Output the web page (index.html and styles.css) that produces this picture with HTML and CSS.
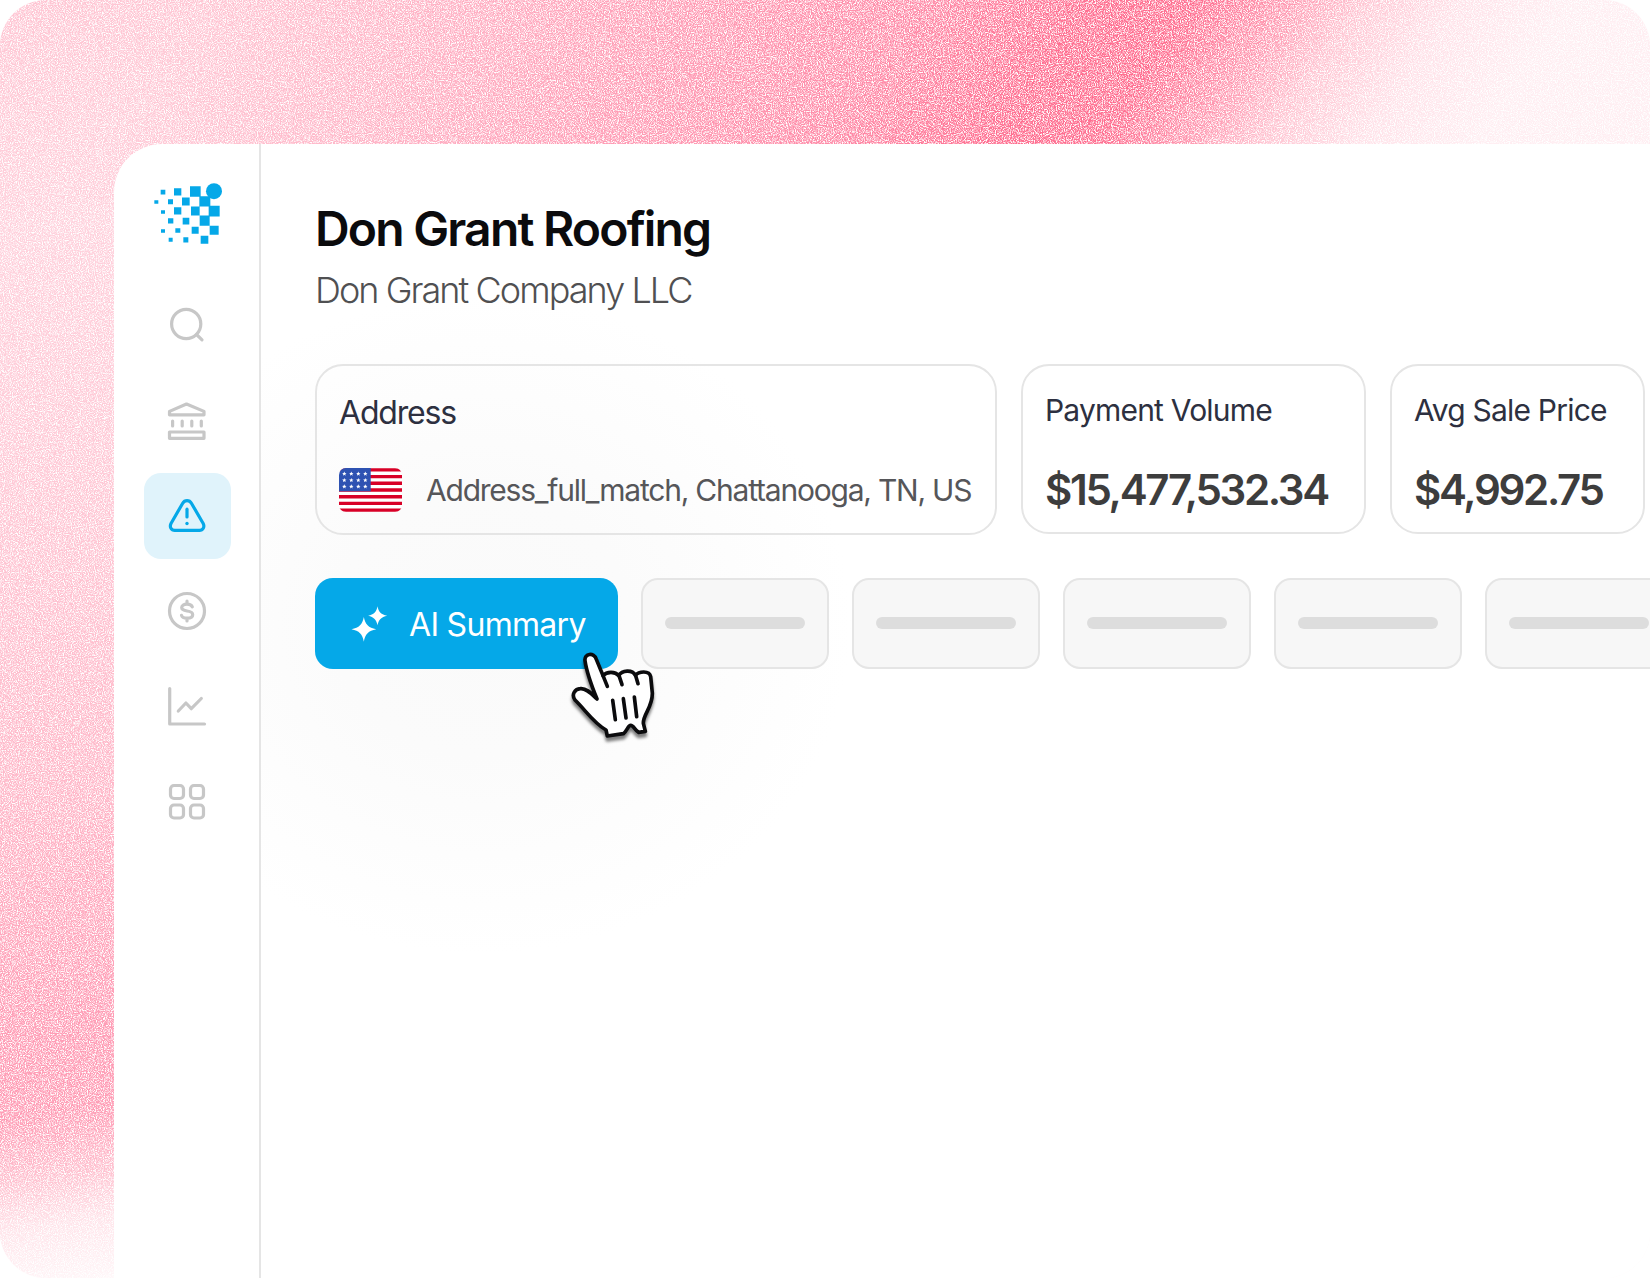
FILE: index.html
```html
<!DOCTYPE html>
<html lang="en">
<head>
  <meta charset="UTF-8" />
  <meta name="viewport" content="width=device-width, initial-scale=1.0"/>
  <title>Don Grant Roofing</title>
  <link rel="stylesheet" href="styles.css">
</head>
<body>

  <div class="stage">
    <svg class="grain" width="1650" height="1278">
      <filter id="grain" x="0" y="0" width="100%" height="100%">
        <feTurbulence type="fractalNoise" baseFrequency="0.87" numOctaves="3" seed="4"/>
        <feColorMatrix values="0 0 0 0 1  0 0 0 0 1  0 0 0 0 1  3.200 0 0 0 -1.300"/>
      </filter>
      <rect width="1650" height="1278" filter="url(#grain)"/>
    </svg>

    <div class="window">
      <nav class="sidebar">
        <svg class="logo" viewBox="40 40 204 182">
          <circle cx="220" cy="64" r="24"/>
          <path d="M60 60h14v14h-14z M100 55h22v22h-22z M148 49h32v32h-32z
            M41 91h12v11h-12z M82 88h15v15h-15z M124 83h23v24h-23z M176 79h33v31h-33z
            M61 121h12v11h-12z M100 112h22v22h-22z M151 110h26v27h-26z M204 108h33v32h-33z
            M82 145h16v16h-16z M126 144h20v20h-20z M177 137h30v31h-30z
            M61 178h12v11h-12z M104 175h15v14h-15z M153 171h21v21h-21z M207 168h27v27h-27z
            M84 204h12v12h-12z M128 202h15v16h-15z M180 198h23v24h-23z"/>
        </svg>

        <a class="nav-item">
          <svg width="40" height="40" viewBox="0 0 40 40">
            <circle cx="19.2" cy="19" r="14.600"/>
            <path d="M29.5 29.5l5.5 5.3"/>
          </svg>
        </a>
        <a class="nav-item">
          <svg width="40" height="40" viewBox="0 0 40 40">
            <path d="M2.500 13.800V10.400L19.500 3L37 10.400v3.400z M2.500 31h34.500v6.300H2.500z"/>
            <path d="M5.600 20v5 M15.200 20v5 M24.800 20v5 M34.300 20v5"/>
          </svg>
        </a>
        <a class="nav-item active">
          <svg width="40" height="40" viewBox="0 0 40 40">
            <path d="M15.700 7.200L4 27.500C2.300 31 4.200 34.300 7.800 34.300h24.600c3.600 0 5.500-3.300 3.800-6.800L24.400 7.200c-2-3.500-6.700-3.500-8.700 0z"/>
            <path d="M20 13.200v7.800"/>
            <circle class="dot" cx="20" cy="27.500" r="1.700"/>
          </svg>
        </a>
        <a class="nav-item">
          <svg width="40" height="40" viewBox="0 0 40 40">
            <circle cx="20" cy="20" r="17.500"/>
            <path d="M25.300 15.800c-.8-1.900-2.700-2.600-5.300-2.600-3.200 0-5.300 1.100-5.300 3.400 0 2.400 2 3 5.300 3.400 3.600.4 5.700 1.200 5.700 3.700 0 2.400-2.300 3.500-5.700 3.500-2.900 0-4.900-.8-5.500-2.800 M20 10.200v3 M20 27v3"/>
          </svg>
        </a>
        <a class="nav-item">
          <svg width="40" height="40" viewBox="0 0 40 40">
            <path d="M2.700 2.500v35.500H37.500"/>
            <path d="M11.300 25l7.600-8 5.400 5.700L34.300 12.500"/>
          </svg>
        </a>
        <a class="nav-item">
          <svg width="40" height="40" viewBox="0 0 40 40">
            <rect x="3.500" y="3.500" width="13" height="13" rx="3.500"/>
            <rect x="23.500" y="3.500" width="13" height="13" rx="3.500"/>
            <rect x="3.500" y="23" width="13" height="13" rx="3.500"/>
            <rect x="23.500" y="23" width="13" height="13" rx="3.500"/>
          </svg>
        </a>
      </nav>

      <main class="content">
        <h1>Don Grant Roofing</h1>
        <p class="subtitle">Don Grant Company LLC</p>

        <div class="cards">
          <div class="card address-card">
            <h2>Address</h2>
            <div class="address-row">
              <svg class="flag" viewBox="0 0 63 44">
                <defs>
                  <path id="star" d="M0-2.200L.65-.7 2.200-.6 1 .4 1.350 2 0 1.100-1.350 2-1 .4-2.200-.6-.65-.7z"/>
                </defs>
                <rect width="63" height="44" fill="#fff"/>
                <path stroke="#d80027" stroke-width="3.400" d="M0 1.900h63M0 8.600h63M0 15.300h63M0 22h63M0 28.700h63M0 35.400h63M0 42.100h63"/>
                <rect width="31.700" height="23.300" fill="#2e52b2"/>
                <g fill="#fff">
                  <use href="#star" x="5.300" y="5.700"/><use href="#star" x="12.300" y="5.700"/><use href="#star" x="19.300" y="5.700"/><use href="#star" x="26.300" y="5.700"/>
                  <use href="#star" x="5.300" y="12.100"/><use href="#star" x="12.300" y="12.100"/><use href="#star" x="19.300" y="12.100"/><use href="#star" x="26.300" y="12.100"/>
                  <use href="#star" x="5.300" y="18.500"/><use href="#star" x="12.300" y="18.500"/><use href="#star" x="19.300" y="18.500"/><use href="#star" x="26.300" y="18.500"/>
                </g>
              </svg>
              <span class="address-text">Address_full_match, Chattanooga, TN, US</span>
            </div>
          </div>
          <div class="card volume-card">
            <h2>Payment Volume</h2>
            <p class="amount">$15,477,532.34</p>
          </div>
          <div class="card price-card">
            <h2>Avg Sale Price</h2>
            <p class="amount">$4,992.75</p>
          </div>
        </div>

        <div class="tabs">
          <button class="ai-btn">
            <svg class="sparkle" viewBox="153 137 110 108">
              <path d="M191 170C195 192 205 202 228 207C205 212 195 221 191 244C187 221 177 212 154 207C177 202 187 192 191 170z"/>
              <path d="M232 138C235 155 243 163 261 166C243 170 235 178 232 195C229 178 221 170 204 166C221 163 229 155 232 138z"/>
            </svg>
            <span>AI Summary</span>
            <svg class="cursor" viewBox="810 270 260 290">
              <path class="hand" d="M855 302C852 280 882 276 889 298L909 347C920 334 946 334 956 347C966 330 997 328 1006 346C1016 334 1048 330 1052 350L1057 400C1057 444 1029 462 1030 490L1036 514L1016 517C1004 510 1001 496 992 496C984 496 982 512 970 521L922 528L918 510C880 488 858 452 825 420C813 403 825 387 841 386C860 384 875 402 891 417C876 380 860 338 855 302z"/>
              <path class="lines" d="M909 347L922 379M957 347L966 374M1007 347L1014 371M938 421L946 479M970 416L978 474M1003 411L1010 470"/>
            </svg>
          </button>
          <div class="tab"><span></span></div>
          <div class="tab"><span></span></div>
          <div class="tab"><span></span></div>
          <div class="tab"><span></span></div>
          <div class="tab"><span></span></div>
        </div>
      </main>
    </div>
  </div>

</body>
</html>
```
FILE: styles.css
```css
/* General */
* {
  box-sizing: border-box;
}

body {
  margin: 0;
  font-family: Inter, "Liberation Sans", sans-serif;
  background: #fff;
}

h1, h2, p {
  margin: 0;
}

.stage {
  position: relative;
  width: 1650px;
  height: 1278px;
  padding: 144px 0 0 114px;
  border-radius: 46px;
  overflow: hidden;
  background:
    linear-gradient(125deg, rgba(255,135,165,0) 170px, rgba(255,135,165,0.3) 340px, rgba(255,125,158,0.6) 560px, #ff8ba8 760px, #ff6e90 900px, #ff6e90 980px, #ff9bb3 1060px, #ffc6d3 1120px, #ffe2e9 1200px, #ffeef2 1290px) no-repeat 0 0 / 1650px 200px,
    linear-gradient(172deg, #ffc4d2 0, #ffd2dd 230px, #ffc9d6 480px, #ffb8c9 780px, #ff9cb5 1030px, #ff9cb5 1110px, #ffc3d1 1175px, #ffe4ea 1220px, #fff6f8 1280px);
}

.grain {
  position: absolute;
  top: 0;
  left: 0;
}

/* Window */
.window {
  position: relative;
  display: flex;
  height: 1134px;
  border-top-left-radius: 48px;
  overflow: hidden;
  background: #fff;
}

/* Sidebar */
.sidebar {
  width: 147px;
  flex-shrink: 0;
  display: flex;
  flex-direction: column;
  align-items: center;
  gap: 9.300px;
  padding-top: 39px;
  border-right: 2px solid #e5e5e5;
}

.logo {
  width: 68px;
  height: 61px;
  margin: 0 0 29px 2px;
  fill: #05a8e8;
}

.nav-item {
  width: 87px;
  height: 86px;
  margin-left: 1px;
  display: flex;
  align-items: center;
  justify-content: center;
  border-radius: 17px;
}

.nav-item svg {
  fill: none;
  stroke: #c7c7c7;
  stroke-width: 3.200;
  stroke-linecap: round;
  stroke-linejoin: round;
}

.nav-item.active {
  background: #e0f3fb;
}

.nav-item.active svg {
  stroke: #05a8e8;
}

.nav-item .dot {
  fill: #05a8e8;
  stroke: none;
}

/* Main Content */
.content {
  flex: 1;
  min-width: 0;
  padding: 56px 0 0 54px;
  background: radial-gradient(ellipse 370px 330px at 220px 480px, #fafafa 0, #fbfbfb 40%, #fff 100%);
}

h1 {
  font-size: 48px;
  line-height: 58px;
  font-weight: 600;
  letter-spacing: -1.800px;
  color: #0b0b0d;
}

.subtitle {
  margin-top: 10px;
  font-size: 36px;
  line-height: 44px;
  font-weight: 300;
  letter-spacing: -1.950px;
  color: #505052;
}

/* Cards */
.cards {
  display: flex;
  align-items: flex-start;
  gap: 24px;
  margin-top: 52px;
}

.card {
  flex-shrink: 0;
  height: 170px;
  padding: 24px 22px;
  border: 2px solid #e5e5e5;
  border-radius: 28px;
  white-space: nowrap;
}

.card h2 {
  font-size: 30px;
  line-height: 40px;
  font-weight: 400;
  letter-spacing: -0.800px;
  color: #2d3040;
}

.address-card {
  width: 682px;
  height: 171px;
  padding-top: 27px;
}

.address-card h2 {
  font-size: 32px;
  letter-spacing: -1.200px;
}

.volume-card {
  width: 345px;
}

.price-card {
  width: 255px;
}

.address-row {
  display: flex;
  align-items: center;
  gap: 24px;
  margin-top: 35px;
}

.flag {
  width: 63px;
  height: 44px;
  flex-shrink: 0;
  border-radius: 7px;
}

.address-text {
  font-size: 30px;
  line-height: 44px;
  letter-spacing: -1.220px;
  color: #565659;
}

.amount {
  margin-top: 35px;
  font-size: 42px;
  line-height: 50px;
  font-weight: 600;
  letter-spacing: -2.300px;
  color: #3d3d3d;
}

/* Tabs */
.tabs {
  display: flex;
  gap: 23px;
  margin-top: 42.500px;
}

.ai-btn {
  position: relative;
  width: 303px;
  height: 91.500px;
  flex-shrink: 0;
  display: flex;
  align-items: center;
  gap: 21px;
  padding: 2px 0 0 36px;
  border: none;
  border-radius: 18px;
  background: #05a8e8;
  color: #fff;
  font-family: inherit;
  font-size: 32px;
  letter-spacing: -0.700px;
  white-space: nowrap;
}

.sparkle {
  width: 37px;
  height: 36px;
  fill: #fff;
}

.cursor {
  position: absolute;
  left: 255px;
  top: 72.500px;
  width: 86.700px;
  height: 96.700px;
  overflow: visible;
  z-index: 2;
  filter: drop-shadow(0 4px 1.500px rgba(0,0,0,0.5));
}

.cursor path {
  stroke: #0b0b0d;
  stroke-width: 11;
  stroke-linecap: round;
  stroke-linejoin: round;
}

.hand {
  fill: #fff;
}

.lines {
  fill: none;
}

.tab {
  width: 188px;
  height: 91.500px;
  flex-shrink: 0;
  display: flex;
  align-items: center;
  padding-left: 22px;
  border: 2px solid #e5e5e5;
  border-radius: 17px;
  background: #f7f7f7;
}

.tab span {
  width: 140px;
  height: 12px;
  border-radius: 6px;
  background: #ddd;
}
```
